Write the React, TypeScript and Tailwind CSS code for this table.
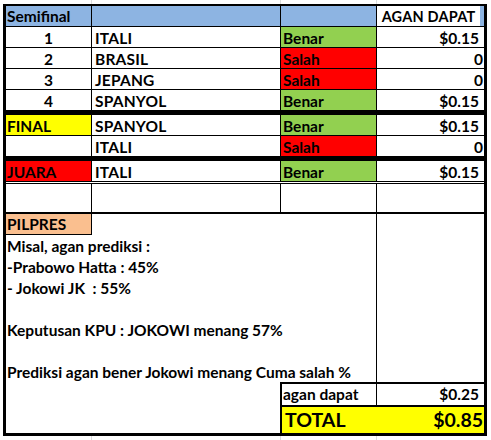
import React from 'react'

type Pick = {
  no?: number
  label?: string
  labelBg?: string
  team: string
  ok: boolean
  value: string
}

const SEMI: Pick[] = [
  { no: 1, team: 'ITALI', ok: true, value: '$0.15' },
  { no: 2, team: 'BRASIL', ok: false, value: '0' },
  { no: 3, team: 'JEPANG', ok: false, value: '0' },
  { no: 4, team: 'SPANYOL', ok: true, value: '$0.15' },
]

const NOTES = [
  'Misal, agan prediksi :',
  '-Prabowo Hatta : 45%',
  '- Jokowi JK\u00a0 : 55%',
  '',
  'Keputusan KPU : JOKOWI menang 57%',
  '',
  'Prediksi agan bener Jokowi menang Cuma salah %',
]

function Row({ p, last }: { p: Pick; last?: string }) {
  return (
    <div className={`flex leading-[22px] ${last ?? 'h-[21px] border-b border-black'}`}>
      <div
        className={`w-[86px] shrink-0 border-r border-black ${
          p.no ? 'text-center' : 'pl-[1px]'
        } ${p.labelBg ?? ''}`}
      >
        {p.no ?? p.label}
      </div>
      <div className="w-[189px] shrink-0 border-r border-black pl-[3px] tracking-[0.2px]">{p.team}</div>
      <div
        className={`w-[96px] shrink-0 border-r border-black pl-[2px] ${
          p.ok ? 'bg-[#92d050]' : 'bg-[#ff0000]'
        }`}
      >
        {p.ok ? 'Benar' : 'Salah'}
      </div>
      <div className={`w-[107px] shrink-0 text-right ${p.value === '0' ? 'pr-[1px]' : 'pr-[5px]'}`}>
        {p.value}
      </div>
    </div>
  )
}

function GridStrip({ h }: { h: string }) {
  // faint excel gridlines outside the table
  return (
    <div className={`flex ${h}`}>
      <div className="w-[92px] shrink-0 border-r border-[#dadcdd]" />
      <div className="w-[189px] shrink-0 border-r border-[#dadcdd]" />
      <div className="w-[96px] shrink-0 border-r border-[#dadcdd]" />
      <div className="w-[113px] shrink-0" />
    </div>
  )
}

export default function App() {
  return (
    <div className="w-[491px] h-[440px] overflow-hidden bg-white text-black font-bold text-[15.5px] font-['Lato',sans-serif]">
      <GridStrip h="h-[4px]" />
      <div className="ml-[3px] w-[484px] border-x-[3px] border-t-2 border-b-[3px] border-black">
        {/* header */}
        <div className="flex h-[21px] leading-[21px] border-b border-black">
          <div className="w-[86px] shrink-0 border-r border-black bg-[#8db4e2] pl-[1px]">Semifinal</div>
          <div className="w-[189px] shrink-0 border-r border-black bg-[#8db4e2]" />
          <div className="w-[96px] shrink-0 border-r border-black bg-[#8db4e2]" />
          <div className="w-[107px] shrink-0 flex">
            <div className="flex-1 text-center whitespace-nowrap text-[14.5px] tracking-[0.2px]">AGAN DAPAT</div>
            <div className="w-[4px] bg-[#8db4e2]" />
          </div>
        </div>

        {SEMI.map((p, i) => (
          <Row key={p.no} p={p} last={i === 3 ? 'h-[25px] border-b-[5px] border-black' : undefined} />
        ))}

        <Row p={{ label: 'FINAL', labelBg: 'bg-[#ffff00]', team: 'SPANYOL', ok: true, value: '$0.15' }} />
        <Row p={{ team: 'ITALI', ok: false, value: '0' }} last="h-[25px] border-b-[5px] border-black" />
        <Row
          p={{ label: 'JUARA', labelBg: 'bg-[#ff0000]', team: 'ITALI', ok: true, value: '$0.15' }}
          last="h-[23px] border-b-[3px] border-double border-black"
        />

        {/* empty row */}
        <div className="flex h-[30px] border-b-2 border-black">
          <div className="w-[86px] shrink-0 border-r border-black" />
          <div className="w-[189px] shrink-0 border-r border-black" />
          <div className="w-[96px] shrink-0 border-r border-black" />
          <div className="w-[107px] shrink-0" />
        </div>

        {/* pilpres */}
        <div className="flex">
          <div className="w-[371px] shrink-0 border-r border-black">
            <div className="w-[86px] h-[21px] leading-[21px] border-r border-b border-black bg-[#fabf8f] pl-[1px]">
              PILPRES
            </div>
            {NOTES.map((t, i) => (
              <div key={i} className="h-[21px] leading-[22px] pl-[1px] whitespace-pre">
                {t}
              </div>
            ))}
          </div>
          <div className="w-[107px] shrink-0" />
        </div>

        <div className="flex">
          <div className="w-[274px] shrink-0" />
          <div className="w-[204px] shrink-0 border-l-2 border-t-2 border-black">
            <div className="flex h-[21px] leading-[21px]">
              <div className="w-[95px] shrink-0 border-r border-black pl-[1px]">agan dapat</div>
              <div className="flex-1 text-right pr-[5px]">$0.25</div>
            </div>
            <div className="flex justify-between items-center h-[28px] border-t-2 border-black bg-[#ffff00] text-[19.5px] leading-[26px] pl-[3px] pr-[1px]">
              <span>TOTAL</span>
              <span>$0.85</span>
            </div>
          </div>
        </div>
      </div>
      <GridStrip h="h-[4px]" />
    </div>
  )
}
